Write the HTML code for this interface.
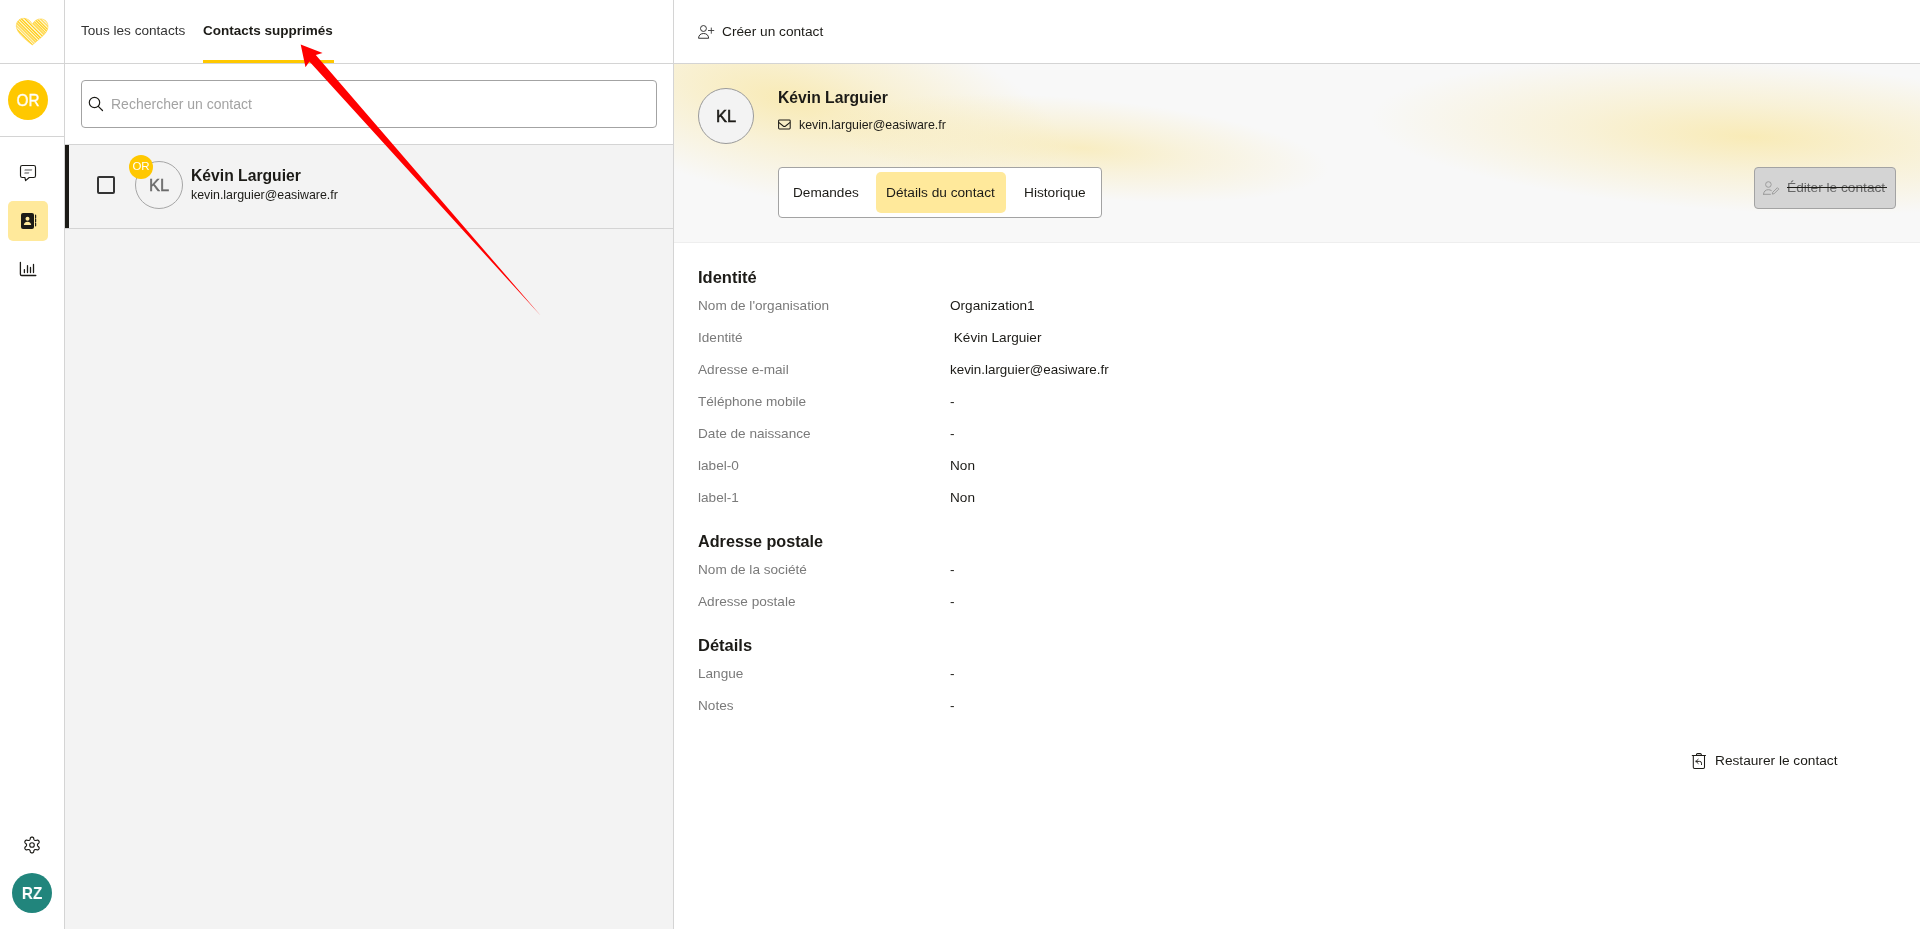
<!DOCTYPE html>
<html lang="fr">
<head>
<meta charset="utf-8">
<title>Contacts</title>
<style>
html,body{margin:0;padding:0;width:1920px;height:929px;overflow:hidden;background:#fff;}
body{font-family:"Liberation Sans",sans-serif;color:#1c1b17;position:relative;}
.a{position:absolute;}
.t{position:absolute;white-space:nowrap;line-height:20px;will-change:transform;}
.hl{position:absolute;height:1px;background:#d4d4d4;}
.vl{position:absolute;width:1px;background:#d4d4d4;}
</style>
</head>
<body>

<!-- ===== SIDEBAR ===== -->
<div id="sidebar" class="a" style="left:0;top:0;width:64px;height:929px;background:#fff;">
  <!-- logo heart -->
  <svg class="a" style="left:14.8px;top:16.6px;" width="34.2" height="29.4" viewBox="0 0 36 31">
    <defs>
      <clipPath id="hc"><path d="M18.2 29.5 C12 24.5 2 17.5 1.4 10.2 C0.9 4.6 5 1.2 9.6 1.4 C13.6 1.6 16.4 4.4 18.2 7.6 C20.2 4.2 23.2 1.8 27.4 2 C32.2 2.3 35.2 6 34.7 11 C34.2 17.4 25 23.5 18.2 29.5 Z"/></clipPath>
    </defs>
    <g clip-path="url(#hc)" stroke="#ffc800" fill="none">
      <rect x="0" y="0" width="36" height="31" fill="#ffe27a" stroke="none" opacity="0.28"/>
      <path d="M-22.0 0 L12.0 34" stroke-width="1.6" opacity="0.6"/>
      <path d="M-18.6 0 L15.4 34" stroke-width="1.1" opacity="0.6"/>
      <path d="M-14.8 0 L19.2 34" stroke-width="1.1" opacity="0.8"/>
      <path d="M-11.0 0 L23.0 34" stroke-width="1.1" opacity="0.95"/>
      <path d="M-8.0 0 L26.0 34" stroke-width="1.1" opacity="0.6"/>
      <path d="M-4.6 0 L29.4 34" stroke-width="2.0" opacity="0.6"/>
      <path d="M-1.6 0 L32.4 34" stroke-width="1.1" opacity="0.95"/>
      <path d="M1.8 0 L35.8 34" stroke-width="1.1" opacity="0.95"/>
      <path d="M4.8 0 L38.8 34" stroke-width="1.3" opacity="0.95"/>
      <path d="M8.6 0 L42.6 34" stroke-width="1.1" opacity="0.95"/>
      <path d="M12.4 0 L46.4 34" stroke-width="2.0" opacity="0.6"/>
      <path d="M15.4 0 L49.4 34" stroke-width="1.1" opacity="0.95"/>
      <path d="M18.4 0 L52.4 34" stroke-width="1.6" opacity="0.8"/>
      <path d="M21.4 0 L55.4 34" stroke-width="1.1" opacity="0.95"/>
      <path d="M24.8 0 L58.8 34" stroke-width="1.3" opacity="0.6"/>
      <path d="M28.6 0 L62.6 34" stroke-width="1.3" opacity="0.8"/>
      <path d="M31.6 0 L65.6 34" stroke-width="1.1" opacity="0.95"/>
      <path d="M34.6 0 L68.6 34" stroke-width="1.3" opacity="0.8"/>
      <path d="M38.4 0 L72.4 34" stroke-width="2.0" opacity="0.8"/>
    </g>
    <path d="M18.2 29.5 C12 24.5 2 17.5 1.4 10.2 C0.9 4.6 5 1.2 9.6 1.4 C13.6 1.6 16.4 4.4 18.2 7.6 C20.2 4.2 23.2 1.8 27.4 2 C32.2 2.3 35.2 6 34.7 11 C34.2 17.4 25 23.5 18.2 29.5 Z" fill="none" stroke="#ffd23a" stroke-width="0.8" opacity="0.7"/>
  </svg>
  <!-- OR avatar -->
  <div class="a" style="left:8px;top:80px;width:40px;height:40px;border-radius:50%;background:#ffc800;"></div>
  <div class="t" style="left:8px;top:91px;width:40px;text-align:center;font-size:17px;color:#fff;-webkit-text-stroke:0.35px #fff;transform:scaleX(0.9);">OR</div>
  <!-- chat icon -->
  <svg class="a" style="left:16px;top:160px;" width="24" height="24" viewBox="16 160 24 24">
    <path d="M22.3 165.5 H33.7 A1.8 1.8 0 0 1 35.5 167.3 V175.7 A1.8 1.8 0 0 1 33.7 177.5 H29.2 L25.6 180.6 L24.9 177.5 H22.3 A1.8 1.8 0 0 1 20.5 175.7 V167.3 A1.8 1.8 0 0 1 22.3 165.5 Z" fill="none" stroke="#1c1b17" stroke-width="1.15" stroke-linejoin="round"/>
    <path d="M24.6 170.4 L31.6 170.4 L32 169.5 L25 169.5 Z" fill="#8a8a8a" stroke="#8a8a8a" stroke-width="0.5" stroke-linejoin="round"/>
    <path d="M24.5 173.4 L28.6 173.4 L29 172.5 L24.9 172.5 Z" fill="#8a8a8a" stroke="#8a8a8a" stroke-width="0.5" stroke-linejoin="round"/>
  </svg>
  <!-- contacts active -->
  <div class="a" style="left:8px;top:201px;width:40px;height:40px;border-radius:5px;background:#ffe99b;"></div>
  <svg class="a" style="left:18px;top:211px;" width="20" height="20" viewBox="0 0 20 20">
    <rect x="3" y="2" width="13" height="16" rx="2" fill="#1c1b17"/>
    <circle cx="9.5" cy="7.8" r="2" fill="#ffe99b"/>
    <path d="M5.8 14 C6.2 11.6 7.6 10.8 9.5 10.8 C11.4 10.8 12.8 11.6 13.2 14 Z" fill="#ffe99b"/>
    <path d="M17.6 4.2 V6.8 M17.6 8.1 V10.7 M17.6 12.2 V14.8" stroke="#1c1b17" stroke-width="1.2" stroke-linecap="round"/>
  </svg>
  <!-- chart icon -->
  <svg class="a" style="left:18px;top:260px;" width="20" height="20" viewBox="0 0 20 20">
    <path d="M2.4 2.4 V14.2 A1.3 1.3 0 0 0 3.7 15.5 H17.8" fill="none" stroke="#1c1b17" stroke-width="1.3" stroke-linecap="round"/>
    <path d="M6.4 9.6 V12.6 M9.5 5.6 V12.6 M12.5 7.4 V12.6 M15.5 4.5 V12.6" stroke="#1c1b17" stroke-width="1.3" stroke-linecap="round"/>
  </svg>
  <!-- gear -->
  <svg class="a" style="left:22px;top:835px;" width="20" height="20" viewBox="0 0 20 20">
    <path d="M15.45 10.00 L15.47 10.24 L15.53 10.48 L15.64 10.74 L15.79 11.02 L16.00 11.33 L16.47 11.73 L16.92 12.18 L17.07 12.57 L17.13 12.95 L17.11 13.32 L17.03 13.66 L16.88 13.97 L16.68 14.26 L16.43 14.50 L16.12 14.70 L15.76 14.84 L15.35 14.90 L14.74 14.74 L14.15 14.53 L13.78 14.50 L13.46 14.51 L13.19 14.55 L12.94 14.62 L12.73 14.72 L12.53 14.86 L12.35 15.03 L12.18 15.25 L12.01 15.52 L11.85 15.86 L11.73 16.47 L11.57 17.08 L11.31 17.41 L11.01 17.65 L10.68 17.82 L10.35 17.92 L10.00 17.95 L9.65 17.92 L9.32 17.82 L8.99 17.65 L8.69 17.41 L8.43 17.08 L8.27 16.47 L8.15 15.86 L7.99 15.52 L7.82 15.25 L7.65 15.03 L7.47 14.86 L7.28 14.72 L7.06 14.62 L6.81 14.55 L6.54 14.51 L6.22 14.50 L5.85 14.53 L5.26 14.74 L4.65 14.90 L4.24 14.84 L3.88 14.70 L3.57 14.50 L3.32 14.26 L3.12 13.98 L2.97 13.66 L2.89 13.32 L2.87 12.95 L2.93 12.57 L3.08 12.18 L3.53 11.73 L4.00 11.33 L4.21 11.02 L4.36 10.74 L4.47 10.48 L4.53 10.24 L4.55 10.00 L4.53 9.76 L4.47 9.52 L4.36 9.26 L4.21 8.98 L4.00 8.67 L3.53 8.27 L3.08 7.82 L2.93 7.43 L2.87 7.05 L2.89 6.68 L2.97 6.34 L3.12 6.02 L3.32 5.74 L3.57 5.50 L3.88 5.30 L4.24 5.16 L4.65 5.10 L5.26 5.26 L5.85 5.47 L6.22 5.50 L6.54 5.49 L6.81 5.45 L7.06 5.38 L7.27 5.28 L7.47 5.14 L7.65 4.97 L7.82 4.75 L7.99 4.48 L8.15 4.14 L8.27 3.53 L8.43 2.92 L8.69 2.59 L8.99 2.35 L9.32 2.18 L9.65 2.08 L10.00 2.05 L10.35 2.08 L10.68 2.18 L11.01 2.35 L11.31 2.59 L11.57 2.92 L11.73 3.53 L11.85 4.14 L12.01 4.48 L12.18 4.75 L12.35 4.97 L12.53 5.14 L12.72 5.28 L12.94 5.38 L13.19 5.45 L13.46 5.49 L13.78 5.50 L14.15 5.47 L14.74 5.26 L15.35 5.10 L15.76 5.16 L16.12 5.30 L16.43 5.50 L16.68 5.74 L16.88 6.03 L17.03 6.34 L17.11 6.68 L17.13 7.05 L17.07 7.43 L16.92 7.82 L16.47 8.27 L16.00 8.67 L15.79 8.98 L15.64 9.26 L15.53 9.52 L15.47 9.76 Z" fill="none" stroke="#1c1b17" stroke-width="1.2" stroke-linejoin="round"/>
    <circle cx="10" cy="10" r="2.3" fill="none" stroke="#1c1b17" stroke-width="1.1"/>
  </svg>
  <!-- RZ avatar -->
  <div class="a" style="left:12px;top:873px;width:40px;height:40px;border-radius:50%;background:#21857c;"></div>
  <div class="t" style="left:12px;top:884px;width:40px;text-align:center;font-size:17px;font-weight:700;color:#fff;transform:scaleX(0.9);">RZ</div>
</div>
<div class="vl" style="left:64px;top:0;height:929px;"></div>
<div class="hl" style="left:0;top:63px;width:64px;"></div>
<div class="hl" style="left:0;top:136px;width:64px;"></div>

<!-- ===== LEFT PANEL ===== -->
<div id="left" class="a" style="left:65px;top:0;width:608px;height:929px;background:#f3f3f3;">
</div>
<!-- left header -->
<div class="a" style="left:65px;top:0;width:608px;height:144px;background:#fff;"></div>
<div class="t" style="left:81px;top:21px;font-size:13.6px;color:#333;">Tous les contacts</div>
<div class="t" style="left:203px;top:21px;font-size:13.5px;font-weight:700;color:#1c1b17;">Contacts supprimés</div>
<div class="a" style="left:203px;top:60px;width:131px;height:3px;background:#ffc800;"></div>
<!-- search -->
<div class="a" style="left:81px;top:80px;width:574px;height:46px;border:1px solid #a3a3a3;border-radius:4px;background:#fff;"></div>
<svg class="a" style="left:86px;top:94px;" width="20" height="20" viewBox="0 0 20 20">
  <circle cx="8.5" cy="8.5" r="5.2" fill="none" stroke="#1c1b17" stroke-width="1.2"/>
  <path d="M12.3 12.3 L16.5 16.5" stroke="#1c1b17" stroke-width="1.2" stroke-linecap="round"/>
</svg>
<div class="t" style="left:111px;top:94px;font-size:14px;color:#a3a3a3;">Rechercher un contact</div>
<div class="hl" style="left:65px;top:144px;width:608px;"></div>
<!-- list item -->
<div class="a" style="left:65px;top:145px;width:4px;height:83px;background:#1c1b17;"></div>
<div class="hl" style="left:65px;top:228px;width:608px;"></div>
<div class="a" style="left:97px;top:176px;width:14px;height:14px;border:2px solid #333;border-radius:2px;"></div>
<div class="a" style="left:135px;top:161px;width:46px;height:46px;border:1px solid #a6a6a6;border-radius:50%;"></div>
<div class="t" style="left:135px;top:175px;width:48px;text-align:center;font-size:16.5px;color:#6b6b6b;-webkit-text-stroke:0.45px #6b6b6b;">KL</div>
<div class="a" style="left:129px;top:155px;width:24px;height:24px;border-radius:50%;background:#ffc800;"></div>
<div class="t" style="left:129px;top:156px;width:24px;text-align:center;font-size:11.5px;color:#fff;">OR</div>
<div class="t" style="left:191px;top:166px;font-size:15.7px;font-weight:700;color:#1c1b17;">Kévin Larguier</div>
<div class="t" style="left:191px;top:185px;font-size:12.4px;color:#1c1b17;">kevin.larguier@easiware.fr</div>
<div class="vl" style="left:673px;top:0;height:929px;"></div>

<!-- ===== RIGHT PANEL ===== -->
<div id="right" class="a" style="left:674px;top:0;width:1246px;height:929px;background:#fff;">
</div>
<!-- create contact -->
<svg class="a" style="left:696px;top:23px;" width="20" height="18" viewBox="0 0 20 18">
  <circle cx="7.45" cy="5.5" r="2.95" fill="none" stroke="#2a2a2a" stroke-width="0.95"/>
  <path d="M2.55 15.25 C2.7 12.2 4.6 10.5 7.6 10.5 C10.6 10.5 12.5 12.2 12.65 15.25 Z" fill="none" stroke="#2a2a2a" stroke-width="0.95" stroke-linejoin="round"/>
  <path d="M15.3 5 V10.3 M12.4 7.5 H17.8" stroke="#3a3a3a" stroke-width="0.9" stroke-linecap="round"/>
</svg>
<div class="t" style="left:722px;top:22px;font-size:13.7px;color:#1c1b17;">Créer un contact</div>

<!-- profile header -->
<div class="a" style="left:674px;top:64px;width:1246px;height:178px;background:#f8f8f8;overflow:hidden;">
  <div class="a" style="left:-164px;top:-64px;width:560px;height:200px;border-radius:50%;background:radial-gradient(closest-side,rgba(249,226,140,0.62),rgba(249,226,140,0.310) 45%,rgba(249,226,140,0));transform:rotate(12deg);"></div>
  <div class="a" style="left:156px;top:34px;width:500px;height:100px;border-radius:50%;background:radial-gradient(closest-side,rgba(249,226,140,0.5),rgba(249,226,140,0.25) 45%,rgba(249,226,140,0));transform:rotate(5deg);"></div>
  <div class="a" style="left:696px;top:-2px;width:760px;height:150px;border-radius:50%;background:radial-gradient(closest-side,rgba(249,226,140,0.6),rgba(249,226,140,0.300) 45%,rgba(249,226,140,0));transform:rotate(3deg);"></div>
</div>
<div class="hl" style="left:674px;top:242px;width:1246px;background:#eeeeee;"></div>
<div class="a" style="left:698px;top:88px;width:54px;height:54px;border:1px solid #9a9a9a;border-radius:50%;background:#f3f3f3;"></div>
<div class="t" style="left:698px;top:106px;width:56px;text-align:center;font-size:16.5px;color:#1c1b17;-webkit-text-stroke:0.55px #1c1b17;">KL</div>
<div class="t" style="left:778px;top:88px;font-size:15.7px;font-weight:700;color:#1c1b17;">Kévin Larguier</div>
<svg class="a" style="left:777px;top:118px;" width="15" height="13" viewBox="0 0 15 13">
  <rect x="1.6" y="1.9" width="11.6" height="9.1" rx="0.9" fill="none" stroke="#1c1b17" stroke-width="1.05"/>
  <path d="M1.7 4.4 L6.2 8.0 Q7.4 8.9 8.6 8.0 L13.1 4.4" fill="none" stroke="#1c1b17" stroke-width="1.05" stroke-linejoin="round"/>
</svg>
<div class="t" style="left:799px;top:115px;font-size:12.4px;color:#1c1b17;">kevin.larguier@easiware.fr</div>
<!-- tabs -->
<div class="a" style="left:778px;top:167px;width:322px;height:49px;border:1px solid #a3a3a3;border-radius:4px;background:#fff;"></div>
<div class="a" style="left:876px;top:172px;width:130px;height:41px;border-radius:5px;background:#ffe99b;"></div>
<div class="t" style="left:793px;top:183px;font-size:13.6px;color:#1c1b17;">Demandes</div>
<div class="t" style="left:886px;top:183px;font-size:13.7px;color:#1c1b17;">Détails du contact</div>
<div class="t" style="left:1024px;top:183px;font-size:13.7px;color:#1c1b17;">Historique</div>
<!-- edit button -->
<div class="a" style="left:1754px;top:167px;width:140px;height:40px;border:1px solid #a3a3a3;border-radius:4px;background:#d4d4d4;"></div>
<svg class="a" style="left:1761px;top:179px;" width="20" height="18" viewBox="0 0 20 18">
  <circle cx="7.4" cy="5.5" r="2.8" fill="none" stroke="#9a9a9a" stroke-width="0.95"/>
  <path d="M2.5 15.3 C2.7 12.3 4.6 10.7 7.3 10.7 C8.5 10.7 9.5 11 10.3 11.5 M2.5 15.3 H9.4" fill="none" stroke="#9a9a9a" stroke-width="1" stroke-linecap="round"/>
  <path d="M11.3 15.1 L11.7 13.3 L16.4 8.7 L17.8 10.1 L13.1 14.7 Z" fill="none" stroke="#9a9a9a" stroke-width="0.95" stroke-linejoin="round"/>
</svg>
<div class="t" style="left:1787px;top:178px;font-size:13.7px;color:#666;">Éditer le contact</div>
<div class="a" style="left:1787px;top:187px;width:100px;height:1.3px;background:#1c1b17;"></div>

<!-- details -->
<div class="t" style="left:698px;top:267px;font-size:16.5px;font-weight:700;color:#1c1b17;">Identité</div>
<div class="t" style="left:698px;top:296px;font-size:13.6px;color:#7a7a7a;">Nom de l'organisation</div>
<div class="t" style="left:950px;top:296px;font-size:13.6px;color:#1c1b17;">Organization1</div>
<div class="t" style="left:698px;top:328px;font-size:13.6px;color:#7a7a7a;">Identité</div>
<div class="t" style="left:950px;top:328px;font-size:13.6px;color:#1c1b17;">&nbsp;Kévin Larguier</div>
<div class="t" style="left:698px;top:360px;font-size:13.6px;color:#7a7a7a;">Adresse e-mail</div>
<div class="t" style="left:950px;top:360px;font-size:13.4px;color:#1c1b17;">kevin.larguier@easiware.fr</div>
<div class="t" style="left:698px;top:392px;font-size:13.6px;color:#7a7a7a;">Téléphone mobile</div>
<div class="t" style="left:950px;top:392px;font-size:13.6px;color:#1c1b17;">-</div>
<div class="t" style="left:698px;top:424px;font-size:13.6px;color:#7a7a7a;">Date de naissance</div>
<div class="t" style="left:950px;top:424px;font-size:13.6px;color:#1c1b17;">-</div>
<div class="t" style="left:698px;top:456px;font-size:13.6px;color:#7a7a7a;">label-0</div>
<div class="t" style="left:950px;top:456px;font-size:13.6px;color:#1c1b17;">Non</div>
<div class="t" style="left:698px;top:488px;font-size:13.6px;color:#7a7a7a;">label-1</div>
<div class="t" style="left:950px;top:488px;font-size:13.6px;color:#1c1b17;">Non</div>

<div class="t" style="left:698px;top:531px;font-size:16.2px;font-weight:700;color:#1c1b17;">Adresse postale</div>
<div class="t" style="left:698px;top:560px;font-size:13.6px;color:#7a7a7a;">Nom de la société</div>
<div class="t" style="left:950px;top:560px;font-size:13.6px;color:#1c1b17;">-</div>
<div class="t" style="left:698px;top:592px;font-size:13.6px;color:#7a7a7a;">Adresse postale</div>
<div class="t" style="left:950px;top:592px;font-size:13.6px;color:#1c1b17;">-</div>

<div class="t" style="left:698px;top:635px;font-size:16.5px;font-weight:700;color:#1c1b17;">Détails</div>
<div class="t" style="left:698px;top:664px;font-size:13.6px;color:#7a7a7a;">Langue</div>
<div class="t" style="left:950px;top:664px;font-size:13.6px;color:#1c1b17;">-</div>
<div class="t" style="left:698px;top:696px;font-size:13.6px;color:#7a7a7a;">Notes</div>
<div class="t" style="left:950px;top:696px;font-size:13.6px;color:#1c1b17;">-</div>

<!-- restore -->
<svg class="a" style="left:1690px;top:752px;" width="18" height="18" viewBox="0 0 18 18">
  <path d="M2.3 3.5 H15.5" stroke="#1c1b17" stroke-width="1.05" stroke-linecap="round"/>
  <path d="M6.5 3.3 V2.6 A1 1 0 0 1 7.5 1.6 H10.3 A1 1 0 0 1 11.3 2.6 V3.3" fill="none" stroke="#1c1b17" stroke-width="1.05"/>
  <path d="M3.3 3.6 V15.3 A1.2 1.2 0 0 0 4.5 16.5 H13.3 A1.2 1.2 0 0 0 14.5 15.3 V3.6" fill="none" stroke="#1c1b17" stroke-width="1.05" stroke-linejoin="round"/>
  <path d="M6.0 9.4 L8.2 7.3 M6.0 9.4 L8.2 11.5 M6.0 9.4 H9.7 A1.8 1.8 0 0 1 11.5 11.2 V12.6" fill="none" stroke="#1c1b17" stroke-width="0.95" stroke-linecap="round" stroke-linejoin="round"/>
</svg>
<div class="t" style="left:1715px;top:751px;font-size:13.7px;color:#1c1b17;">Restaurer le contact</div>

<div class="hl" style="left:0;top:63px;width:1920px;"></div>
<!-- red annotation arrow -->
<svg class="a" style="left:0;top:0;" width="1920" height="929" viewBox="0 0 1920 929">
  <polygon points="300.7,44.4 322.6,53.1 315.8,55 541,316 309.4,61.5 305.5,67.3" fill="#ff0000"/>
</svg>


</body>
</html>
